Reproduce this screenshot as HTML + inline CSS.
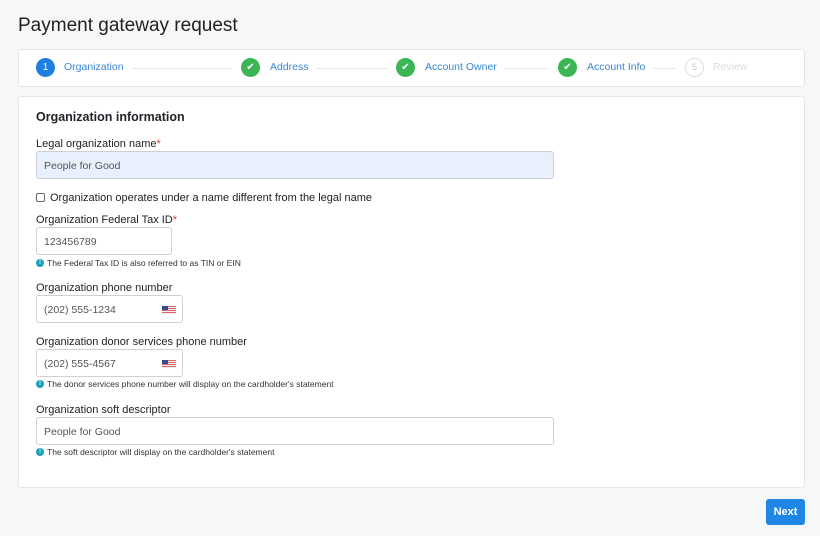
<!DOCTYPE html>
<html><head><meta charset="utf-8"><style>
*{box-sizing:border-box;margin:0;padding:0}
body{width:820px;height:536px;background:#f6f7f9;font-family:"Liberation Sans",sans-serif;color:#212529;position:relative;overflow:hidden}
.abs{position:absolute}
h1{position:absolute;left:18px;top:15px;font-size:19px;font-weight:normal;color:#222}
.card{position:absolute;left:18px;width:787px;background:#fff;border:1px solid #e3e5e8;border-radius:3px}
.step{position:absolute;top:58px;width:19px;height:19px;border-radius:50%;color:#fff;font-size:10px;text-align:center;line-height:19px}
.g{background:#3cb554}
.slabel{position:absolute;top:61px;font-size:10.5px;color:#3a86d4}
.line{position:absolute;top:68px;height:1px;background:#e3e6ea}
label{position:absolute;left:36px;font-size:11px;color:#222}
label b{color:#d33;font-weight:normal}
.inp{position:absolute;left:36px;height:28px;border:1px solid #cdd1d6;border-radius:3px;font-size:10.5px;color:#555;padding-left:7px;line-height:28px;background:#fff}
.help{position:absolute;left:36px;font-size:8.5px;color:#333;line-height:10px}
.help i{display:inline-block;width:8px;height:8px;border-radius:50%;background:#17a2b8;color:#fff;font-size:6px;line-height:8px;text-align:center;font-style:normal;font-weight:bold;margin-right:3px;vertical-align:top;margin-top:1px}
.flag{position:absolute;right:6px;top:10px;width:14px;height:8px;background:repeating-linear-gradient(#d66 0 1px,#eee 1px 2px)}
.flag:before{content:"";position:absolute;left:0;top:0;width:6px;height:4px;background:#3b4a8a}
</style></head><body>
<h1>Payment gateway request</h1>
<div class="card" style="top:49px;height:38px"></div>
<div class="step" style="left:36px;background:#1f7fe0">1</div>
<div class="slabel" style="left:64px">Organization</div>
<div class="line" style="left:132px;width:100px"></div>
<div class="step g" style="left:241px">✔</div>
<div class="slabel" style="left:270px">Address</div>
<div class="line" style="left:316px;width:72px"></div>
<div class="step g" style="left:396px">✔</div>
<div class="slabel" style="left:425px">Account Owner</div>
<div class="line" style="left:505px;width:44px"></div>
<div class="step g" style="left:558px">✔</div>
<div class="slabel" style="left:587px">Account Info</div>
<div class="line" style="left:653px;width:23px"></div>
<div class="step" style="left:685px;border:1px solid #ddd;color:#ccc;line-height:17px;font-size:9px">5</div>
<div class="slabel" style="left:713px;color:#ddd">Review</div>

<div class="card" style="top:96px;height:392px"></div>
<div class="abs" style="left:36px;top:110px;font-size:12.5px;font-weight:bold">Organization information</div>
<label style="top:138px">Legal organization name<b>*</b></label>
<div class="inp" style="top:151px;width:518px;background:#e8f0fe">People for Good</div>
<div class="abs" style="left:36px;top:193px;width:9px;height:9px;border:1px solid #666;border-radius:2px"></div>
<label style="top:192px;left:50px">Organization operates under a name different from the legal name</label>
<label style="top:214px">Organization Federal Tax ID<b>*</b></label>
<div class="inp" style="top:227px;width:136px">123456789</div>
<div class="help" style="top:258px"><i>!</i>The Federal Tax ID is also referred to as TIN or EIN</div>
<label style="top:282px">Organization phone number</label>
<div class="inp" style="top:295px;width:147px">(202) 555-1234<span class="flag"></span></div>
<label style="top:336px">Organization donor services phone number</label>
<div class="inp" style="top:349px;width:147px">(202) 555-4567<span class="flag"></span></div>
<div class="help" style="top:379px"><i>!</i>The donor services phone number will display on the cardholder's statement</div>
<label style="top:404px">Organization soft descriptor</label>
<div class="inp" style="top:417px;width:518px">People for Good</div>
<div class="help" style="top:447px"><i>!</i>The soft descriptor will display on the cardholder's statement</div>
<div class="abs" style="left:766px;top:499px;width:39px;height:26px;background:#1f86e4;border-radius:3px;color:#fff;font-size:11px;font-weight:bold;text-align:center;line-height:26px">Next</div>
</body></html>
